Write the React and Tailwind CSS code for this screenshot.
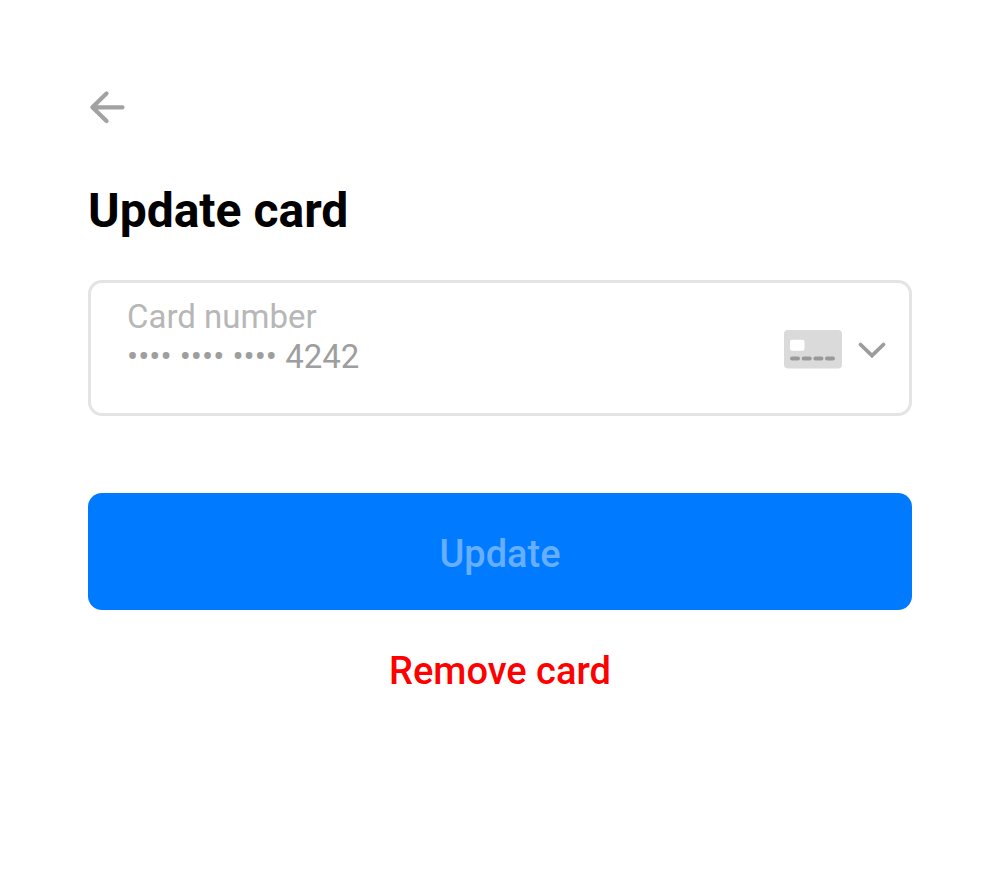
function BackArrow() {
  return (
    <svg className="h-10 w-10" viewBox="0 0 40 40" fill="none" stroke="#a2a2a2" strokeWidth="4.2" strokeLinecap="round" strokeLinejoin="round" aria-hidden="true">
      <path d="M34.5 19.3H5M18.5 5.5L4.4 19.3L18.5 33" />
    </svg>
  );
}

function CardIcon() {
  return (
    <svg className="h-10 w-[58px]" viewBox="0 0 58 40" aria-hidden="true">
      <rect x="0" y="1" width="58" height="38.5" rx="4" fill="#dadada" />
      <rect x="6" y="10.8" width="14.5" height="11" rx="2" fill="#fff" />
      <g fill="#999">
        <rect x="6" y="27.5" width="10" height="4" rx="2" />
        <rect x="17.7" y="27.5" width="10" height="4" rx="2" />
        <rect x="29.4" y="27.5" width="10" height="4" rx="2" />
        <rect x="41" y="27.5" width="10" height="4" rx="2" />
      </g>
    </svg>
  );
}

function Chevron() {
  return (
    <svg className="h-8 w-8" viewBox="0 0 32 32" fill="none" stroke="#9c9c9c" strokeWidth="3.8" strokeLinecap="round" strokeLinejoin="miter" aria-hidden="true">
      <path d="M4.5 11.5L16 22.7L27.5 11.5" />
    </svg>
  );
}

export default function App() {
  return (
    <main className="min-h-screen bg-white px-22 py-22 font-['Roboto',sans-serif]">
      <button type="button" aria-label="Go back" className="block">
        <BackArrow />
      </button>
      <h1 className="mt-[53px] text-[48px] leading-15 font-bold text-black">Update card</h1>
      <form className="mt-[39px]">
        <div className="flex items-center rounded-[14px] border-3 border-[#e4e4e4] pt-[14px] pr-[21px] pb-9 pl-9">
          <div className="min-w-0 flex-1">
            <label htmlFor="card" className="block text-[33px] leading-10 text-[#b7b7b7]">
              Card number
            </label>
            <input id="card" type="text" readOnly defaultValue="•••• •••• •••• 4242" className="block h-10 w-full text-[33px] leading-10 text-[#9e9e9e] outline-none" />
          </div>
          <button type="button" aria-label="Choose card" className="mt-6 flex items-center gap-[14px]">
            <CardIcon />
            <Chevron />
          </button>
        </div>
        <button type="submit" disabled className="mt-[77px] block w-full rounded-[14px] bg-[#007aff] pt-[35px] pb-[30px] text-[38px] leading-13 font-medium text-[#66afff]">
          Update
        </button>
        <button type="button" className="mx-auto mt-[37px] block text-[38px] leading-12 font-medium text-[#ff0000]">
          Remove card
        </button>
      </form>
    </main>
  );
}
